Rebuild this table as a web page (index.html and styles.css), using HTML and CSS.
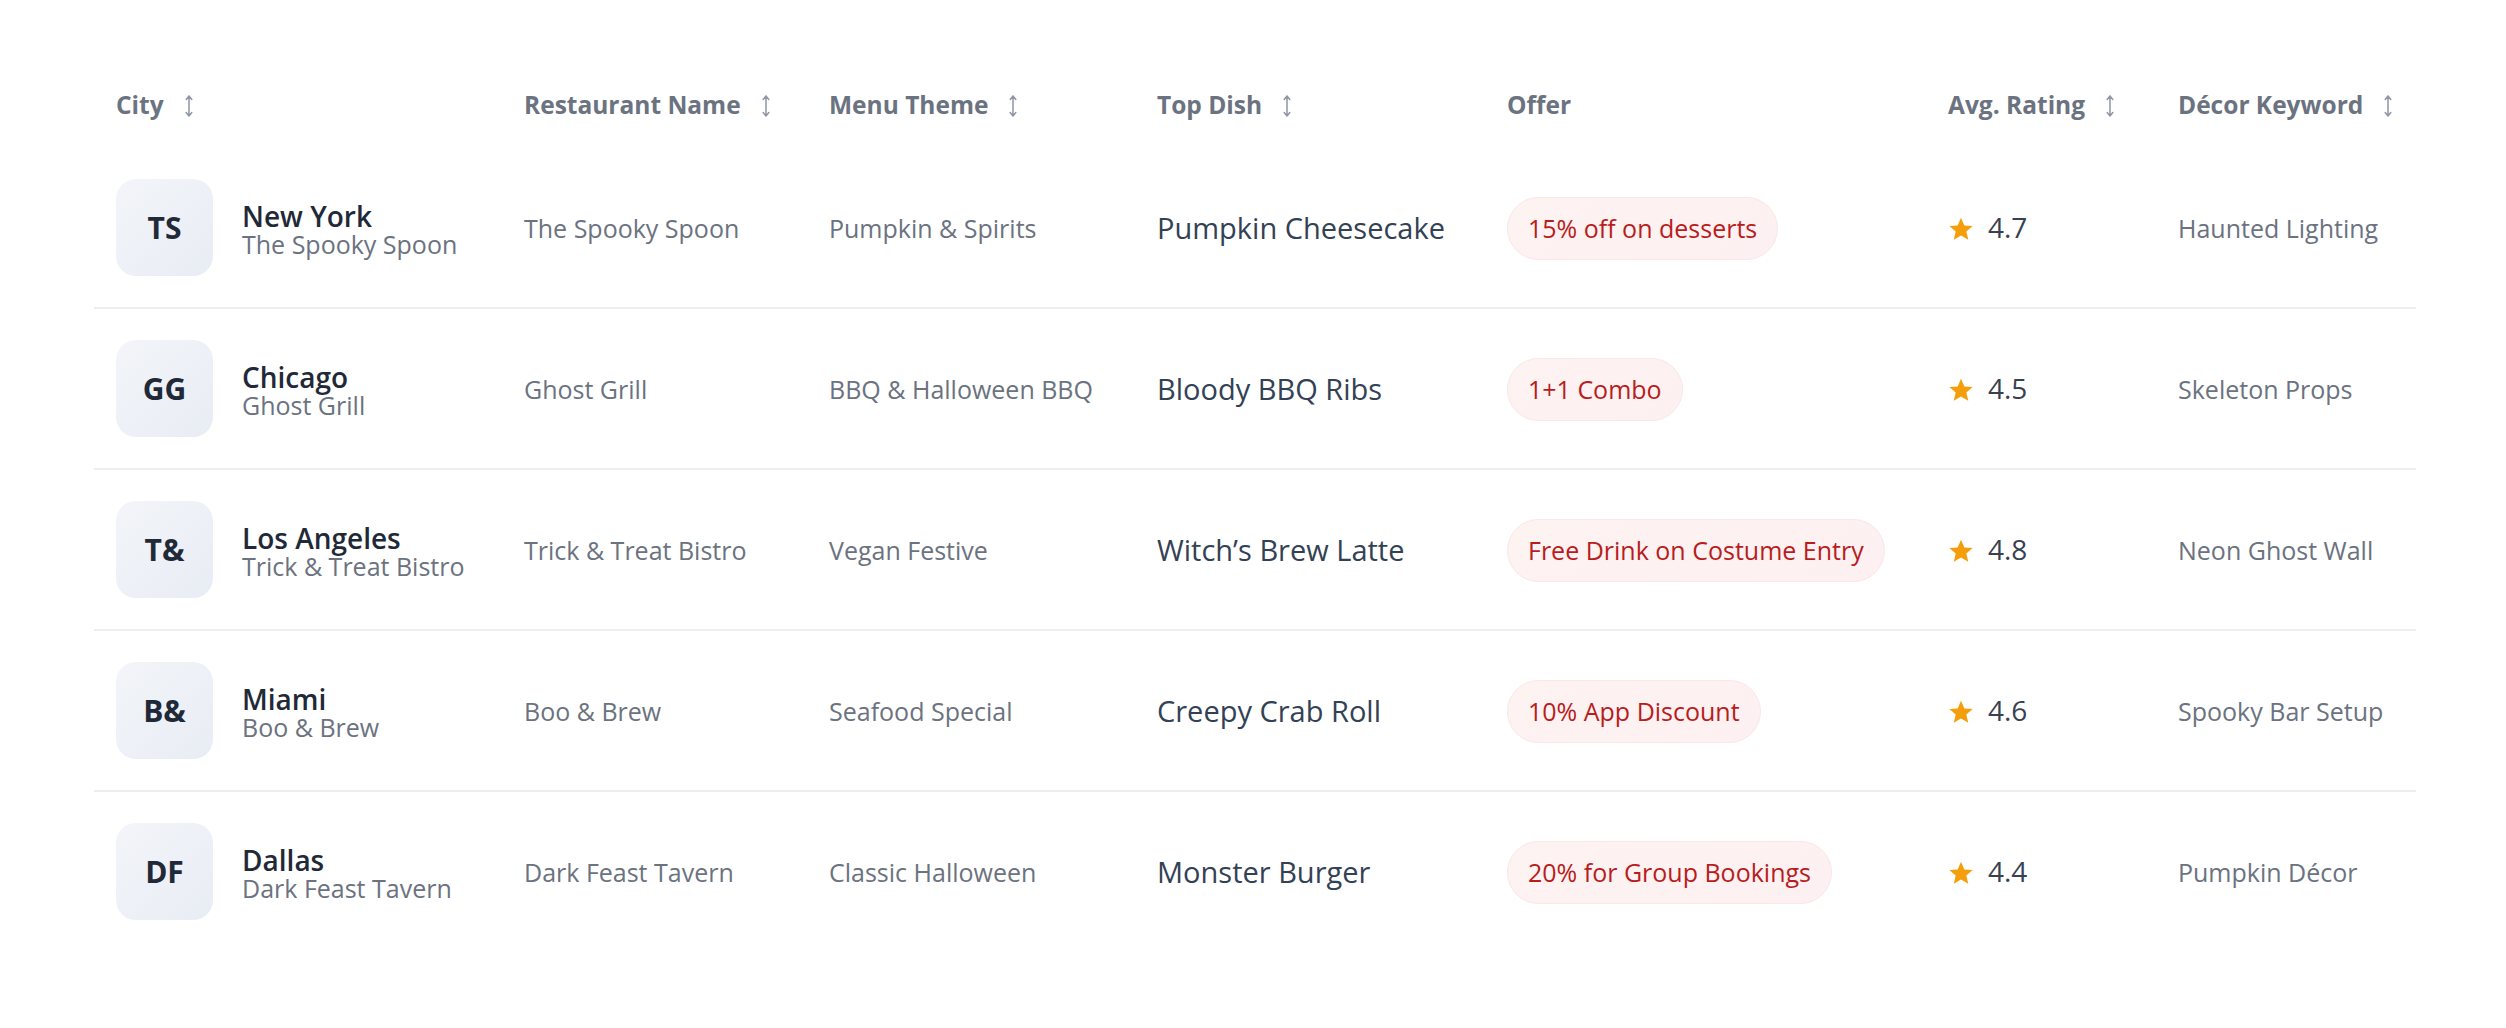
FILE: index.html
```html
<!DOCTYPE html>
<html lang="en">
<head>
<meta charset="utf-8">
<title>Halloween Restaurants</title>
<link rel="stylesheet" href="styles.css">
</head>
<body>
<div class="wrap">
<table class="tbl">
  <colgroup>
    <col class="c-city"><col class="c-rest"><col class="c-menu"><col class="c-dish"><col class="c-offer"><col class="c-rate"><col class="c-decor">
  </colgroup>
  <thead>
    <tr>
      <th><span class="th-in">City<svg class="sort" viewBox="0 0 10 24"><path d="M5 2v20M2.2 5.5L5 2l2.8 3.5M2.2 18.5L5 22l2.8-3.5"/></svg></span></th>
      <th><span class="th-in">Restaurant Name<svg class="sort" viewBox="0 0 10 24"><path d="M5 2v20M2.2 5.5L5 2l2.8 3.5M2.2 18.5L5 22l2.8-3.5"/></svg></span></th>
      <th><span class="th-in">Menu Theme<svg class="sort" viewBox="0 0 10 24"><path d="M5 2v20M2.2 5.5L5 2l2.8 3.5M2.2 18.5L5 22l2.8-3.5"/></svg></span></th>
      <th><span class="th-in">Top Dish<svg class="sort" viewBox="0 0 10 24"><path d="M5 2v20M2.2 5.5L5 2l2.8 3.5M2.2 18.5L5 22l2.8-3.5"/></svg></span></th>
      <th><span class="th-in">Offer</span></th>
      <th><span class="th-in">Avg. Rating<svg class="sort" viewBox="0 0 10 24"><path d="M5 2v20M2.2 5.5L5 2l2.8 3.5M2.2 18.5L5 22l2.8-3.5"/></svg></span></th>
      <th><span class="th-in">Décor Keyword<svg class="sort" viewBox="0 0 10 24"><path d="M5 2v20M2.2 5.5L5 2l2.8 3.5M2.2 18.5L5 22l2.8-3.5"/></svg></span></th>
    </tr>
  </thead>
  <tbody>
    <tr>
      <td class="cc"><div class="city"><div class="avatar">TS</div><div class="city-txt"><div class="city-name">New York</div><div class="city-sub">The Spooky Spoon</div></div></div></td>
      <td class="muted">The Spooky Spoon</td>
      <td class="muted">Pumpkin &amp; Spirits</td>
      <td class="dish">Pumpkin Cheesecake</td>
      <td><span class="pill">15% off on desserts</span></td>
      <td><span class="rating"><svg class="star" viewBox="0 0 24 24"><path d="M12 1.5l3.1 7.2 7.7.6-5.9 5.1 1.8 7.6L12 17.9 5.3 22l1.8-7.6L1.2 9.3l7.7-.6z"/></svg>4.7</span></td>
      <td class="muted">Haunted Lighting</td>
    </tr>
    <tr>
      <td class="cc"><div class="city"><div class="avatar">GG</div><div class="city-txt"><div class="city-name">Chicago</div><div class="city-sub">Ghost Grill</div></div></div></td>
      <td class="muted">Ghost Grill</td>
      <td class="muted">BBQ &amp; Halloween BBQ</td>
      <td class="dish">Bloody BBQ Ribs</td>
      <td><span class="pill">1+1 Combo</span></td>
      <td><span class="rating"><svg class="star" viewBox="0 0 24 24"><path d="M12 1.5l3.1 7.2 7.7.6-5.9 5.1 1.8 7.6L12 17.9 5.3 22l1.8-7.6L1.2 9.3l7.7-.6z"/></svg>4.5</span></td>
      <td class="muted">Skeleton Props</td>
    </tr>
    <tr>
      <td class="cc"><div class="city"><div class="avatar">T&amp;</div><div class="city-txt"><div class="city-name">Los Angeles</div><div class="city-sub">Trick &amp; Treat Bistro</div></div></div></td>
      <td class="muted">Trick &amp; Treat Bistro</td>
      <td class="muted">Vegan Festive</td>
      <td class="dish">Witch’s Brew Latte</td>
      <td><span class="pill">Free Drink on Costume Entry</span></td>
      <td><span class="rating"><svg class="star" viewBox="0 0 24 24"><path d="M12 1.5l3.1 7.2 7.7.6-5.9 5.1 1.8 7.6L12 17.9 5.3 22l1.8-7.6L1.2 9.3l7.7-.6z"/></svg>4.8</span></td>
      <td class="muted">Neon Ghost Wall</td>
    </tr>
    <tr>
      <td class="cc"><div class="city"><div class="avatar">B&amp;</div><div class="city-txt"><div class="city-name">Miami</div><div class="city-sub">Boo &amp; Brew</div></div></div></td>
      <td class="muted">Boo &amp; Brew</td>
      <td class="muted">Seafood Special</td>
      <td class="dish">Creepy Crab Roll</td>
      <td><span class="pill">10% App Discount</span></td>
      <td><span class="rating"><svg class="star" viewBox="0 0 24 24"><path d="M12 1.5l3.1 7.2 7.7.6-5.9 5.1 1.8 7.6L12 17.9 5.3 22l1.8-7.6L1.2 9.3l7.7-.6z"/></svg>4.6</span></td>
      <td class="muted">Spooky Bar Setup</td>
    </tr>
    <tr>
      <td class="cc"><div class="city"><div class="avatar">DF</div><div class="city-txt"><div class="city-name">Dallas</div><div class="city-sub">Dark Feast Tavern</div></div></div></td>
      <td class="muted">Dark Feast Tavern</td>
      <td class="muted">Classic Halloween</td>
      <td class="dish">Monster Burger</td>
      <td><span class="pill">20% for Group Bookings</span></td>
      <td><span class="rating"><svg class="star" viewBox="0 0 24 24"><path d="M12 1.5l3.1 7.2 7.7.6-5.9 5.1 1.8 7.6L12 17.9 5.3 22l1.8-7.6L1.2 9.3l7.7-.6z"/></svg>4.4</span></td>
      <td class="muted">Pumpkin Décor</td>
    </tr>
  </tbody>
</table>
</div>
</body>
</html>
```

FILE: styles.css
```css
* { box-sizing: border-box; }
html, body { margin: 0; padding: 0; background: #ffffff; }
body {
  font-family: "Open Sans", "Noto Sans", "Liberation Sans", sans-serif;
  color: #1f2937;
}
.wrap {
  padding: 62px 90px 0 94px;
}
.tbl {
  width: 2322px;
  border-collapse: collapse;
  table-layout: fixed;
}
.c-city { width: 408px; }
.c-rest { width: 305px; }
.c-menu { width: 328px; }
.c-dish { width: 350px; }
.c-offer { width: 441px; }
.c-rate { width: 230px; }
.c-decor { width: 260px; }

.tbl th {
  text-align: left;
  font-weight: 700;
  font-size: 24.5px;
  line-height: 33px;
  color: #6b7280;
  padding: 25.5px 22px 27.5px;
  white-space: nowrap;
}
.th-in {
  display: inline-flex;
  align-items: center;
  gap: 20px;
}
.sort {
  width: 10px;
  height: 24px;
  margin-top: 4px;
  fill: none;
  stroke: #8f96a3;
  stroke-width: 1.5;
  stroke-linecap: round;
  stroke-linejoin: round;
}
.tbl td {
  padding: 32.5px 22px 31.5px;
  vertical-align: middle;
  border-bottom: 2px solid #eceef1;
  white-space: nowrap;
  font-size: 25px;
  line-height: 34px;
}
.tbl td.cc {
  padding: 31px 22px;
}
.tbl tbody tr:last-child td { border-bottom: none; }

.city {
  display: flex;
  align-items: center;
  gap: 29px;
}
.avatar {
  width: 97px;
  height: 97px;
  border-radius: 20px;
  background: linear-gradient(135deg, #f3f5f9 0%, #e8ecf4 100%);
  display: flex;
  align-items: center;
  justify-content: center;
  font-weight: 700;
  font-size: 30px;
  color: #1f2937;
  flex: none;
}
.city-txt {
  display: flex;
  flex-direction: column;
  margin-top: 4px;
}
.city-name {
  font-size: 28px;
  font-weight: 600;
  line-height: 30px;
  color: #1f2937;
}
.city-sub {
  font-size: 25px;
  line-height: 27px;
  color: #6b7280;
}
.muted { color: #6b7280; }
.tbl td.dish {
  font-size: 29px;
  color: #334155;
}
.pill {
  display: inline-block;
  padding: 13px 20px;
  border-radius: 999px;
  background: linear-gradient(135deg, #fdf3f1 0%, #fdf0f2 100%);
  border: 1px solid #fbe6e8;
  color: #b91c1c;
  font-size: 25px;
  line-height: 35px;
}
.rating {
  display: inline-flex;
  align-items: center;
  gap: 14px;
  margin-top: 3px;
  font-size: 28px;
  color: #374151;
}
.star {
  width: 26px;
  height: 26px;
  margin-top: 3px;
  fill: #f59e0b;
}
```
